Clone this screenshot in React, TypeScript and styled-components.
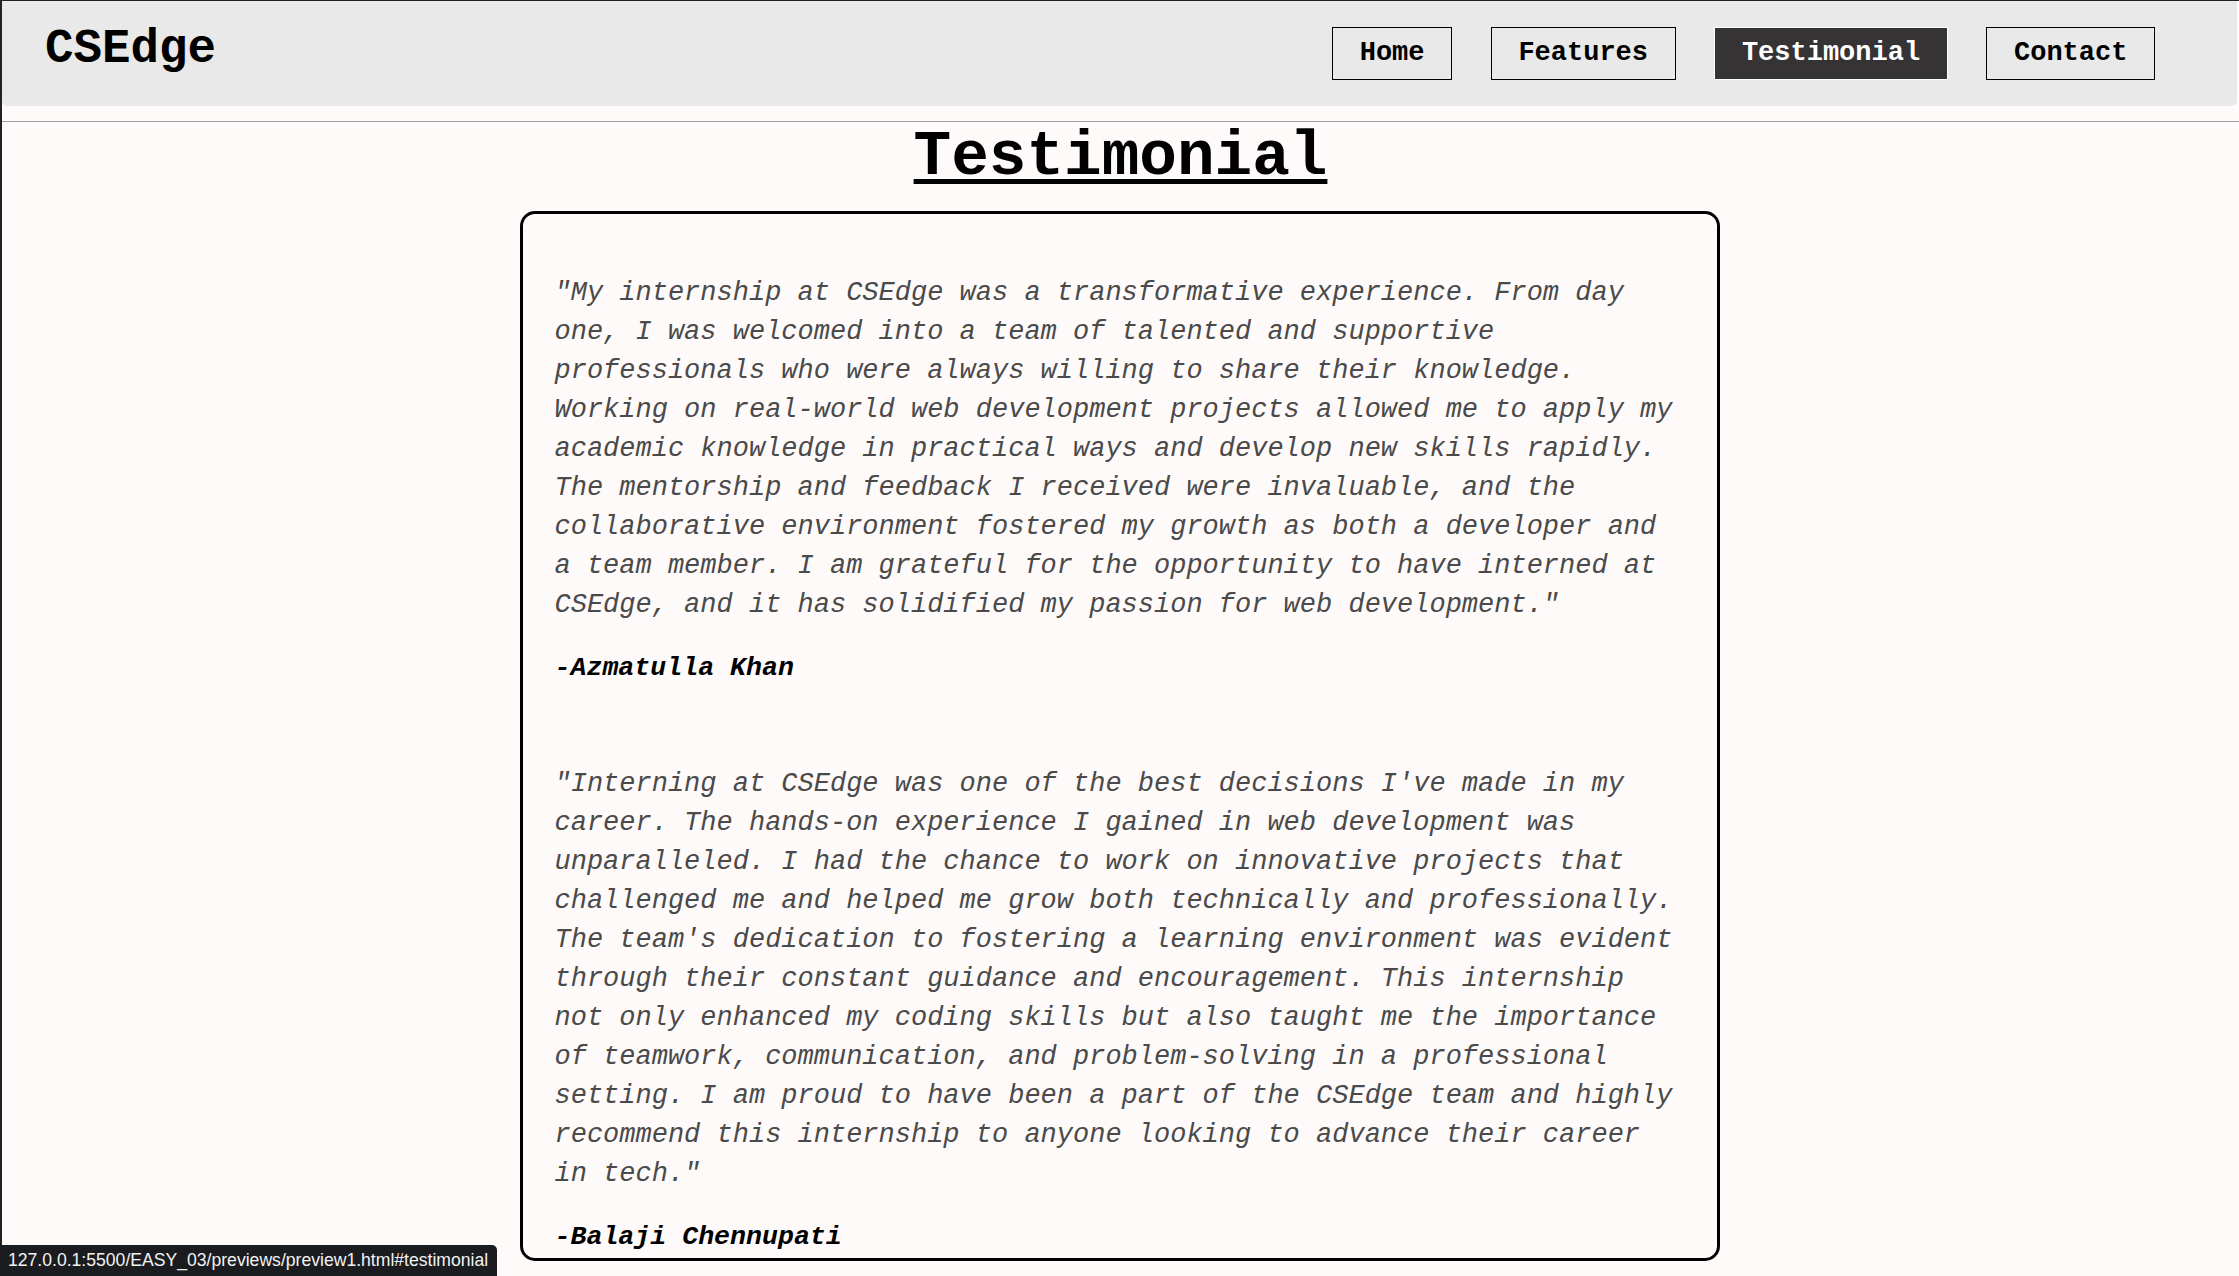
import React from "react";
import styled, { createGlobalStyle } from "styled-components";

const GlobalStyle = createGlobalStyle`
  html, body {
    margin: 0;
    padding: 0;
    background: #fffafa;
  }
  body {
    font-family: "Liberation Mono", "Courier New", monospace;
  }
  * { box-sizing: border-box; }
`;

const Frame = styled.div`
  min-height: 100vh;
  background: #fffafa;
  border-top: 1px solid #1e2226;
  border-left: 2px solid #1e2226;
  padding-bottom: 16px;
`;

const Header = styled.header`
  height: 105px;
  margin-right: 2px;
  background: #e8e9e8;
  border-radius: 0 0 5px 5px;
  display: flex;
  align-items: center;
  justify-content: space-between;
  padding: 0 82px 0 43px;
`;

const Logo = styled.div`
  align-self: flex-start;
  margin-top: 20.5px;
  font-family: "Liberation Mono", "Courier New", monospace;
  font-weight: 700;
  font-size: 47.5px;
  line-height: normal;
  color: #000;
`;

const Nav = styled.nav`
  display: flex;
  align-items: center;
  gap: 38.7px;
`;

const NavButton = styled.a<{ $active?: boolean }>`
  display: block;
  height: 53px;
  padding: 0 26.6px;
  border: 1px solid ${(p) => (p.$active ? "#ffffff" : "#000000")};
  background: ${(p) => (p.$active ? "#353333" : "transparent")};
  color: ${(p) => (p.$active ? "#ffffff" : "#000000")};
  font-family: "Liberation Mono", "Courier New", monospace;
  font-weight: 700;
  font-size: 27px;
  line-height: 51px;
  text-decoration: none;
  white-space: nowrap;
`;

const Rule = styled.div`
  height: 1px;
  margin-top: 15px;
  background: #9e9e9e;
`;

const Title = styled.h2`
  margin: 0;
  text-align: center;
  font-family: "Liberation Mono", "Courier New", monospace;
  font-weight: 700;
  font-size: 62.7px;
  line-height: normal;
  color: #000;
  text-decoration: underline;
  text-decoration-thickness: 5px;
  text-underline-offset: 5px;
`;

const Card = styled.section`
  width: 1200px;
  margin: 18px auto 0;
  position: relative;
  left: -1px;
  border: 3px solid #000;
  border-radius: 15px;
  padding: 59.5px 32px 6px;
  display: flex;
  flex-direction: column;
  gap: 82px;
`;

const Item = styled.article`
  display: flex;
  flex-direction: column;
  gap: 28px;
`;

const Quote = styled.p`
  margin: 0;
  font-family: "Liberation Mono", "Courier New", monospace;
  font-style: italic;
  font-size: 27px;
  line-height: 39px;
  color: #4a4a4a;
`;

const Author = styled.h4`
  margin: 0;
  font-family: "Liberation Mono", "Courier New", monospace;
  font-style: italic;
  font-weight: 700;
  font-size: 26.6px;
  line-height: normal;
  color: #000;
`;

const StatusBar = styled.div`
  position: fixed;
  left: 0;
  bottom: 0;
  height: 31px;
  padding: 0 9px 0 8px;
  display: flex;
  align-items: center;
  background: #1b1c20;
  color: #f2f2f2;
  border-top-right-radius: 5px;
  font-family: "Liberation Sans", Arial, sans-serif;
  font-size: 17.6px;
  white-space: nowrap;
`;

const testimonials = [
  {
    text: "\"My internship at CSEdge was a transformative experience. From day one, I was welcomed into a team of talented and supportive professionals who were always willing to share their knowledge. Working on real-world web development projects allowed me to apply my academic knowledge in practical ways and develop new skills rapidly. The mentorship and feedback I received were invaluable, and the collaborative environment fostered my growth as both a developer and a team member. I am grateful for the opportunity to have interned at CSEdge, and it has solidified my passion for web development.\"",
    author: "-Azmatulla Khan",
  },
  {
    text: "\"Interning at CSEdge was one of the best decisions I've made in my career. The hands-on experience I gained in web development was unparalleled. I had the chance to work on innovative projects that challenged me and helped me grow both technically and professionally. The team's dedication to fostering a learning environment was evident through their constant guidance and encouragement. This internship not only enhanced my coding skills but also taught me the importance of teamwork, communication, and problem-solving in a professional setting. I am proud to have been a part of the CSEdge team and highly recommend this internship to anyone looking to advance their career in tech.\"",
    author: "-Balaji Chennupati",
  },
];

const links = ["Home", "Features", "Testimonial", "Contact"];

export default function App() {
  return (
    <>
      <GlobalStyle />
      <Frame>
        <Header>
          <Logo>CSEdge</Logo>
          <Nav>
            {links.map((l) => (
              <NavButton key={l} href={`#${l.toLowerCase()}`} $active={l === "Testimonial"}>
                {l}
              </NavButton>
            ))}
          </Nav>
        </Header>
        <Rule />
        <Title id="testimonial">Testimonial</Title>
        <Card>
          {testimonials.map((t) => (
            <Item key={t.author}>
              <Quote>{t.text}</Quote>
              <Author>{t.author}</Author>
            </Item>
          ))}
        </Card>
      </Frame>
      <StatusBar>127.0.0.1:5500/EASY_03/previews/preview1.html#testimonial</StatusBar>
    </>
  );
}
